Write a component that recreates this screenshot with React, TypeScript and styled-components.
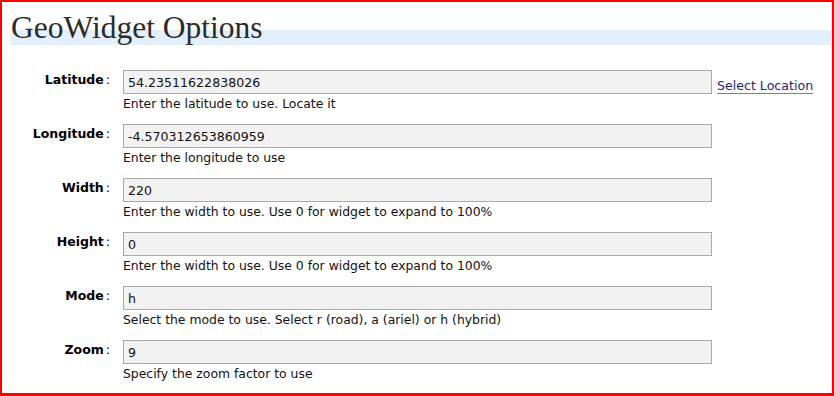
import styled, { createGlobalStyle } from "styled-components";

const GlobalStyle = createGlobalStyle`
  html, body {
    margin: 0;
    padding: 0;
    background: #fff;
  }
`;

const fields = [
  { label: "Latitude", value: "54.23511622838026", help: "Enter the latitude to use. Locate it", link: "Select Location" },
  { label: "Longitude", value: "-4.570312653860959", help: "Enter the longitude to use" },
  { label: "Width", value: "220", help: "Enter the width to use. Use 0 for widget to expand to 100%" },
  { label: "Height", value: "0", help: "Enter the width to use. Use 0 for widget to expand to 100%" },
  { label: "Mode", value: "h", help: "Select the mode to use. Select r (road), a (ariel) or h (hybrid)" },
  { label: "Zoom", value: "9", help: "Specify the zoom factor to use" },
];

export default function App() {
  return (
    <Frame>
      <GlobalStyle />
      <Title>GeoWidget Options</Title>
      <Form>
        {fields.map((f) => (
          <Row key={f.label}>
            <Label>
              <b>{f.label}</b>:
            </Label>
            <Field>
              <Input defaultValue={f.value} type="text" />
              <Help>{f.help}</Help>
            </Field>
            <Extra>{f.link && <Link href="#">{f.link}</Link>}</Extra>
          </Row>
        ))}
      </Form>
    </Frame>
  );
}

const Frame = styled.div`
  box-sizing: border-box;
  width: 834px;
  height: 396px;
  border: 2px solid #f00;
  border-bottom-width: 3px;
  padding: 8px 0 0 9px;
  font-family: "DejaVu Sans", Verdana, sans-serif;
  color: #000;
`;

const Title = styled.h1`
  margin: 0;
  height: 35px;
  font-family: "Liberation Serif", "Times New Roman", serif;
  font-weight: normal;
  font-size: 31.5px;
  line-height: 35px;
  color: #2b2b2b;
  background: linear-gradient(to bottom, #fff 0, #fff 20px, #e3f0fb 20px, #e3f0fb 35px);
`;

const Form = styled.div`
  display: flex;
  flex-direction: column;
  gap: 11px;
  margin-top: 25px;
`;

const Row = styled.div`
  display: grid;
  grid-template-columns: 99px 589px auto;
  column-gap: 13px;
  align-items: start;
`;

const Label = styled.div`
  text-align: right;
  font-size: 12.5px;
  padding-top: 2px;
  line-height: 15px;
  b {
    font-weight: bold;
    margin-right: 2px;
  }
`;

const Field = styled.div`
  display: flex;
  flex-direction: column;
`;

const Input = styled.input`
  box-sizing: border-box;
  width: 589px;
  height: 24px;
  margin: 0;
  padding: 1px 4px 0;
  border: 1px solid #a9a9a9;
  background: #f2f2f2;
  font-family: "DejaVu Sans", Verdana, sans-serif;
  font-size: 12.6px;
  color: #111;
  outline: none;
`;

const Help = styled.div`
  font-size: 12.4px;
  line-height: 18px;
  padding-top: 1px;
  color: #111;
`;

const Extra = styled.div`
  padding-top: 5px;
  margin-left: -8px;
`;

const Link = styled.a`
  font-size: 12.6px;
  color: #1b2a6b;
  text-decoration: underline;
  text-decoration-color: #6b84b8;
  text-underline-offset: 3px;
`;
